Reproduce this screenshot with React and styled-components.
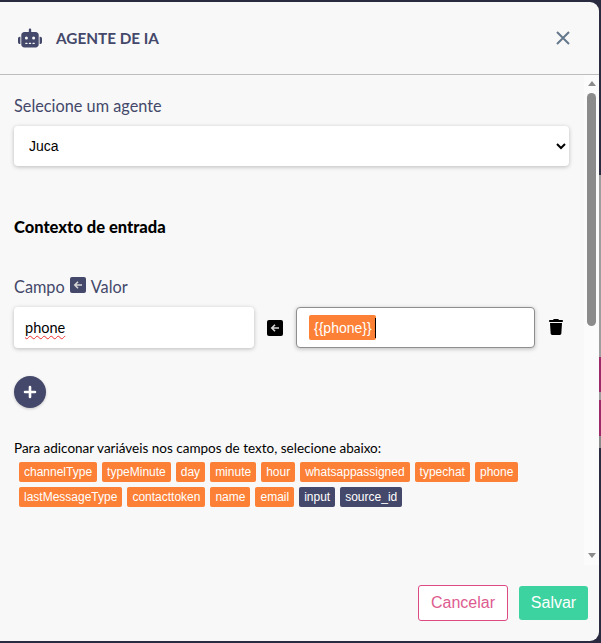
import styled, { createGlobalStyle } from "styled-components";

const GlobalStyle = createGlobalStyle`
  html, body {
    margin: 0;
    padding: 0;
    height: 100%;
    overflow: hidden;
    background: #2a2b40;
  }
  #root {
    height: 100%;
  }
  * {
    box-sizing: border-box;
  }
`;

// the page behind the modal only shows as a thin edge on the right and bottom
const Backdrop = styled.div`
  width: 601px;
  height: 643px;
  padding: 2px 2px 2px 0;
  background:
    linear-gradient(#2a2b40, #2a2b40) 0 0 / 598px 100% no-repeat,
    linear-gradient(#8c8c8c, #8c8c8c) 14px 641px / 26px 2px no-repeat,
    linear-gradient(
      #2a2b40 0 175px,
      #9e9e9e 175px 357px,
      #9c2a68 357px 392px,
      #9e9e9e 392px 400px,
      #9c2a68 400px 436px,
      #8a8a8a 436px 448px,
      #2a2b40 448px
    );
`;

const Modal = styled.div`
  height: 639px;
  display: flex;
  flex-direction: column;
  background: #f8f8f8;
  border-radius: 0 9px 9px 0;
  font-family: "Lato", "Open Sans", sans-serif;
`;

const Header = styled.div`
  height: 73px;
  flex: none;
  display: flex;
  align-items: center;
  padding: 0 26px 0 18px;
  border-bottom: 1px solid #bdbdbd;
`;

const Title = styled.h2`
  margin: 0 0 0 14px;
  flex: 1;
  font-size: 15.3px;
  font-weight: 700;
  color: #44486a;
`;

const CloseButton = styled.button`
  border: none;
  padding: 0;
  width: 20px;
  height: 20px;
  background: none;
  color: #64788c;
  display: flex;
`;

const BodyRow = styled.div`
  flex: 1;
  display: flex;
  min-height: 0;
  height: 490px;
`;

const Body = styled.div`
  flex: 1;
  padding: 21px 0 0 14px;
  min-width: 0;
`;

const Label = styled.div`
  font-size: 16.3px;
  line-height: 20px;
  color: #44486a;
`;

const AgentSelect = styled.select`
  display: block;
  width: 555px;
  height: 40px;
  margin-top: 10px;
  padding: 0 11px;
  border: none;
  border-radius: 4px;
  background: #fff;
  font-family: "Liberation Sans", sans-serif;
  font-size: 14px;
  color: #000;
  box-shadow: 0 1px 4px rgba(0, 0, 0, 0.25);
`;

const SectionTitle = styled.h3`
  margin: 51px 0 0;
  font-size: 16.5px;
  line-height: 20px;
  font-weight: 900;
  color: #000;
`;

const MapLabel = styled(Label)`
  margin-top: 40px;
  display: flex;
  align-items: center;
  gap: 5px;
`;

const ArrowBox = styled.span`
  width: 16px;
  height: 16px;
  flex: none;
  display: inline-flex;
  align-items: center;
  justify-content: center;
  border-radius: 2px;
  margin-bottom: ${(p) => (p.$raised ? "4px" : "0")};
  background: ${(p) => (p.$dark ? "#000" : "#44486a")};
  color: #d6d6d6;
`;

const MapRow = styled.div`
  margin-top: 10px;
  display: flex;
  align-items: center;
`;

const TextField = styled.div`
  height: 41px;
  display: flex;
  align-items: center;
  border-radius: 4px;
  background: #fff;
  font-size: 14.5px;
  color: #000;
  box-shadow: 0 1px 4px rgba(0, 0, 0, 0.25);
  border: ${(p) => (p.$focused ? "1px solid #8e8e8e" : "none")};
  width: ${(p) => (p.$focused ? "239px" : "240px")};
  padding-left: ${(p) => (p.$focused ? "12px" : "11px")};
`;

const Misspelled = styled.span`
  text-decoration: underline wavy #f03030 1px;
  text-underline-offset: 2px;
`;

const MiddleArrow = styled.div`
  width: 42px;
  flex: none;
  display: flex;
  justify-content: center;
`;

const ValueChip = styled.span`
  height: 25px;
  padding: 0 4px 0 5px;
  display: flex;
  align-items: center;
  border-radius: 2px;
  background: #fc8035;
  color: #fff;
  font-family: "Liberation Sans", sans-serif;
  font-size: 14px;
`;

const Caret = styled.span`
  width: 1px;
  height: 20px;
  margin-left: -1px;
  background: #000;
`;

const TrashButton = styled.button`
  margin-left: 14px;
  border: none;
  padding: 0;
  width: 16px;
  height: 18px;
  background: none;
  display: flex;
  color: #000;
`;

const AddButton = styled.button`
  margin-top: 28px;
  width: 32px;
  height: 32px;
  border: none;
  border-radius: 50%;
  padding: 0;
  display: flex;
  align-items: center;
  justify-content: center;
  background: #44486a;
  color: #fff;
  box-shadow: 0 1px 3px rgba(0, 0, 0, 0.2);
`;

const Hint = styled.p`
  margin: 31px 0 0;
  font-size: 13.5px;
  line-height: 18px;
  color: #000;
`;

const TagList = styled.div`
  margin-top: 5px;
  width: 530px;
  padding-left: 5px;
  display: flex;
  flex-wrap: wrap;
  gap: 5px;
`;

const Tag = styled.span`
  height: 20px;
  padding: 0 5px;
  display: flex;
  align-items: center;
  border-radius: 2px;
  background: ${(p) => (p.$dark ? "#44486a" : "#fc8035")};
  color: #fff;
  font-family: "Liberation Sans", sans-serif;
  font-size: 12px;
`;

const Scrollbar = styled.div`
  width: 15px;
  flex: none;
  background: #fbfbfb;
  display: flex;
  flex-direction: column;
  align-items: center;
`;

const ScrollArrow = styled.div`
  width: 0;
  height: 0;
  margin-top: ${(p) => (p.$up ? "6px" : "0")};
  margin-bottom: ${(p) => (p.$up ? "0" : "7px")};
  border-left: 4px solid transparent;
  border-right: 4px solid transparent;
  border-bottom: ${(p) => (p.$up ? "5px solid #8b8b8b" : "none")};
  border-top: ${(p) => (p.$up ? "none" : "5px solid #8b8b8b")};
`;

const ScrollThumb = styled.div`
  width: 9px;
  height: 233px;
  margin-top: 7px;
  margin-bottom: auto;
  border-radius: 5px;
  background: #8b8b8b;
`;

const Footer = styled.div`
  flex: none;
  height: 76px;
  display: flex;
  justify-content: flex-end;
  align-items: flex-start;
  gap: 11px;
  padding: 20px 11px 0 0;
`;

const CancelButton = styled.button`
  width: 90px;
  height: 36px;
  border: 1px solid #dd4b85;
  border-radius: 3px;
  background: #fff;
  color: #dd5b8f;
  font-family: "Liberation Sans", sans-serif;
  font-size: 16px;
  padding: 0;
`;

const SaveButton = styled.button`
  width: 69px;
  height: 34px;
  margin-top: 1px;
  border: none;
  border-radius: 3px;
  background: #3dd3a0;
  color: #fff;
  font-family: "Liberation Sans", sans-serif;
  font-size: 16px;
  padding: 0;
`;

const tags = [
  { name: "channelType" },
  { name: "typeMinute" },
  { name: "day" },
  { name: "minute" },
  { name: "hour" },
  { name: "whatsappassigned" },
  { name: "typechat" },
  { name: "phone" },
  { name: "lastMessageType" },
  { name: "contacttoken" },
  { name: "name" },
  { name: "email" },
  { name: "input", dark: true },
  { name: "source_id", dark: true },
];

const RobotIcon = () => (
  <svg width="24" height="20" viewBox="0 0 640 512" fill="#44486a">
    <path d="M320 0c17.7 0 32 14.3 32 32V96H472c44.2 0 80 35.8 80 80V432c0 44.2-35.8 80-80 80H168c-44.2 0-80-35.8-80-80V176c0-44.2 35.8-80 80-80H288V32c0-17.7 14.3-32 32-32zM208 384c-8.8 0-16 7.2-16 16s7.2 16 16 16h32c8.8 0 16-7.2 16-16s-7.2-16-16-16H208zm96 0c-8.8 0-16 7.2-16 16s7.2 16 16 16h32c8.8 0 16-7.2 16-16s-7.2-16-16-16H304zm96 0c-8.8 0-16 7.2-16 16s7.2 16 16 16h32c8.8 0 16-7.2 16-16s-7.2-16-16-16H400zM264 256a40 40 0 1 0-80 0 40 40 0 1 0 80 0zm152 40a40 40 0 1 0 0-80 40 40 0 1 0 0 80zM48 224H64V416H48c-26.5 0-48-21.5-48-48V272c0-26.5 21.5-48 48-48zm544 0c26.5 0 48 21.5 48 48v96c0 26.5-21.5 48-48 48H576V224h16z" />
  </svg>
);

const CloseIcon = () => (
  <svg width="20" height="20" viewBox="0 0 20 20" fill="none" stroke="currentColor" strokeWidth="2">
    <path d="M4 4l12 12M16 4L4 16" />
  </svg>
);

const ArrowIcon = () => (
  <svg width="10" height="10" viewBox="0 0 10 10" fill="none" stroke="currentColor" strokeWidth="1.6">
    <path d="M9 5H2M5 1.8L1.8 5 5 8.2" />
  </svg>
);

const TrashIcon = () => (
  <svg width="14" height="16" viewBox="0 0 448 512" fill="currentColor">
    <path d="M135.2 17.7L128 32H32C14.3 32 0 46.3 0 64S14.3 96 32 96H416c17.7 0 32-14.3 32-32s-14.3-32-32-32H320l-7.2-14.3C307.4 6.8 296.3 0 284.2 0H163.8c-12.1 0-23.2 6.8-28.6 17.7zM416 128H32L53.2 467c1.6 25.3 22.6 45 47.9 45H346.9c25.3 0 46.3-19.7 47.9-45L416 128z" />
  </svg>
);

const PlusIcon = () => (
  <svg width="14" height="14" viewBox="0 0 14 14" fill="none" stroke="currentColor" strokeWidth="2.6" strokeLinecap="round">
    <path d="M7 2v10M2 7h10" />
  </svg>
);

function App() {
  return (
    <Backdrop>
      <GlobalStyle />
      <Modal>
        <Header>
          <RobotIcon />
          <Title>AGENTE DE IA</Title>
          <CloseButton>
            <CloseIcon />
          </CloseButton>
        </Header>
        <BodyRow>
          <Body>
            <Label>Selecione um agente</Label>
            <AgentSelect defaultValue="Juca">
              <option>Juca</option>
            </AgentSelect>
            <SectionTitle>Contexto de entrada</SectionTitle>
            <MapLabel>
              Campo
              <ArrowBox $raised>
                <ArrowIcon />
              </ArrowBox>
              Valor
            </MapLabel>
            <MapRow>
              <TextField>
                <Misspelled>phone</Misspelled>
              </TextField>
              <MiddleArrow>
                <ArrowBox $dark>
                  <ArrowIcon />
                </ArrowBox>
              </MiddleArrow>
              <TextField $focused>
                <ValueChip>{"{{phone}}"}</ValueChip>
                <Caret />
              </TextField>
              <TrashButton>
                <TrashIcon />
              </TrashButton>
            </MapRow>
            <AddButton>
              <PlusIcon />
            </AddButton>
            <Hint>Para adiconar variáveis nos campos de texto, selecione abaixo:</Hint>
            <TagList>
              {tags.map((tag) => (
                <Tag key={tag.name} $dark={tag.dark}>
                  {tag.name}
                </Tag>
              ))}
            </TagList>
          </Body>
          <Scrollbar>
            <ScrollArrow $up />
            <ScrollThumb />
            <ScrollArrow />
          </Scrollbar>
        </BodyRow>
        <Footer>
          <CancelButton>Cancelar</CancelButton>
          <SaveButton>Salvar</SaveButton>
        </Footer>
      </Modal>
    </Backdrop>
  );
}

export default App;
